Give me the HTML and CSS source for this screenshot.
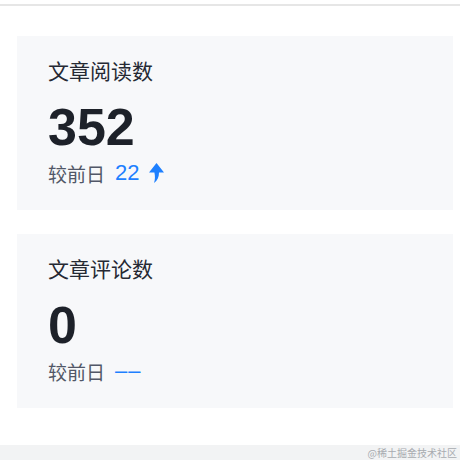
FILE: index.html
```html
<!DOCTYPE html>
<html lang="zh-CN">
<head>
    <meta charset="UTF-8">
    <meta name="viewport" content="width=device-width, initial-scale=1.0">
    <title>数据概览</title>
    <link rel="stylesheet" href="styles.css">
</head>
<body>
    <div class="top-line"></div>

    <div class="stats">
        <div class="stat-card">
            <div class="stat-title">文章阅读数</div>
            <div class="stat-value">352</div>
            <div class="stat-compare">
                <span class="compare-label">较前日</span>
                <span class="compare-value">22</span>
                <svg class="compare-arrow" width="15" height="20" viewBox="0 0 15 20">
                    <path d="M7.5 0 L15 9.5 L10 9.5 C10 14 8.5 17.5 5 20 C6.2 16.5 6.2 13 5.4 9.5 L0 9.5 Z" fill="#1e80ff"/>
                </svg>
            </div>
        </div>

        <div class="stat-card">
            <div class="stat-title">文章评论数</div>
            <div class="stat-value">0</div>
            <div class="stat-compare">
                <span class="compare-label">较前日</span>
                <span class="compare-value dash">––</span>
            </div>
        </div>
    </div>

    <div class="footer-bar">@稀土掘金技术社区</div>
</body>
</html>
```

FILE: styles.css
```css
body {
    margin: 0;
    background: #fff;
    font-family: "Liberation Sans", "Noto Sans CJK SC", sans-serif;
    color: #1f2329;
    width: 460px;
    height: 460px;
    position: relative;
    overflow: hidden;
}

.top-line {
    height: 2px;
    margin-top: 4px;
    background: #e6e6e6;
}

.stats {
    padding: 30px 7px 0 17px;
    display: flex;
    flex-direction: column;
    gap: 24px;
}

.stat-card {
    background: #f7f8fa;
    padding: 21px 30px 25px 31px;
}

.stat-title {
    font-family: "Noto Sans CJK SC", sans-serif;
    font-size: 21px;
    line-height: 26px;
    color: #252933;
}

.stat-value {
    margin-top: 14px;
    font-size: 52px;
    line-height: 60px;
    font-weight: 700;
    color: #1d2129;
}

.stat-compare {
    margin-top: 4px;
    display: flex;
    align-items: center;
    height: 24px;
}

.compare-label {
    font-family: "Noto Sans CJK SC", sans-serif;
    font-size: 19px;
    color: #515767;
}

.compare-value {
    margin-left: 10px;
    color: #1e80ff;
    font-size: 22px;
}

.compare-value.dash {
    letter-spacing: 1px;
}

.compare-arrow {
    margin-left: 9px;
}

.footer-bar {
    position: absolute;
    left: 0;
    right: 0;
    bottom: 0;
    height: 15px;
    background: #f2f3f4;
    color: #a8abb0;
    font-family: "Noto Sans CJK SC", serif;
    font-size: 10px;
    line-height: 15px;
    text-align: right;
    padding-right: 3px;
}
```
